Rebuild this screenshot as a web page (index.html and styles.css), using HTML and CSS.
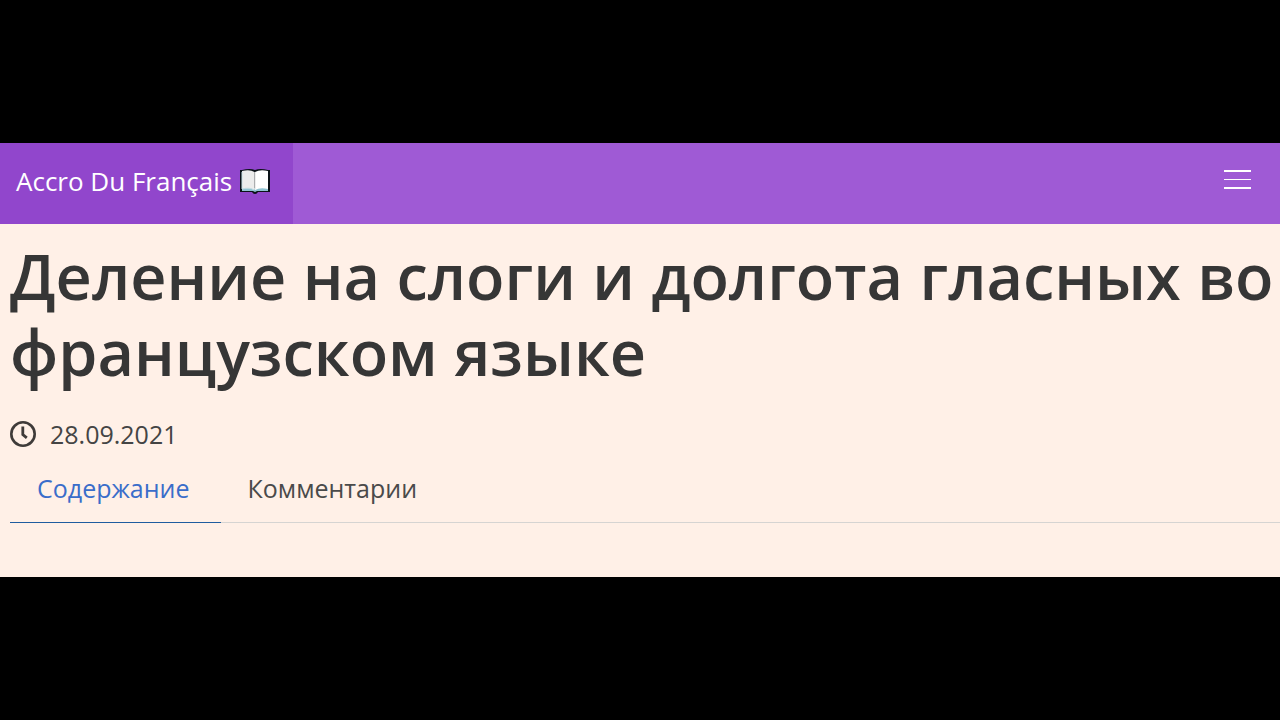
FILE: index.html
```html
<!DOCTYPE html>
<html lang="ru">
<head>
<meta charset="utf-8">
<meta name="viewport" content="width=device-width, initial-scale=1">
<title>Accro Du Français</title>
<link rel="stylesheet" href="styles.css">
</head>
<body>
<div class="page">
  <header class="navbar">
    <a class="brand" href="#">
      <span>Accro Du Français</span>
      <svg class="brand-icon" viewBox="0 0 32 26" aria-hidden="true">
        <path d="M1 2H3Q11 0 16 2Q21 0 29 2H31V24H19Q18 26 16 26Q14 26 13 24H1Z" fill="#0b1218"/>
        <path d="M3 20H29V23H18L16 24L14 23H3Z" fill="#8fc3d2"/>
        <path d="M3 3Q11 1 15.500 4V22Q11 19 3 21Z" fill="#ececec"/>
        <path d="M29 3Q21 1 16 4V22Q21 19 29 21Z" fill="#fff"/>
        <path d="M3 4V21Q11 19 15 22" fill="none" stroke="#c5dde3"/>
        <path d="M16 4V21" stroke="#dcdcdc"/>
      </svg>
    </a>
    <button class="burger" type="button" aria-label="Меню"><span></span><span class="burger-middle"></span><span></span></button>
  </header>
  <main class="article">
    <h1 class="title">Деление на слоги и долгота гласных во французском языке</h1>
    <div class="meta">
      <svg class="clock" viewBox="0 0 26 26" aria-hidden="true">
        <circle cx="13" cy="13" r="11.7" fill="none" stroke="#3f3b39" stroke-width="2.6"/>
        <path d="M12.8 5.500V13.5L16.8 16.8" fill="none" stroke="#3f3b39" stroke-width="2.8"/>
      </svg>
      <time datetime="2021-09-28">28.09.2021</time>
    </div>
    <nav class="tabs">
      <a class="tab tab-active" href="#content">Содержание</a>
      <a class="tab" href="#comments">Комментарии</a>
    </nav>
  </main>
</div>
</body>
</html>
```
FILE: styles.css
```css
* {
  box-sizing: border-box;
}

body {
  margin: 0;
  min-height: 100vh;
  padding: 143px 0;
  background: #000;
  color: #444;
  font-family: "Open Sans", "Noto Sans", sans-serif;
  font-size: 25px;
  line-height: 40px;
}

.page {
  background: #fff0e7;
}

.navbar {
  display: flex;
  justify-content: space-between;
  background: #9f5ad5;
}

.brand {
  display: flex;
  align-items: center;
  gap: 7px;
  padding: 18px 22px 23px 16px;
  background: #9146cc;
  color: #fff;
  font-size: 26px;
  text-decoration: none;
}

.brand-icon {
  width: 32px;
  height: 26px;
}

.burger {
  display: flex;
  flex-direction: column;
  justify-content: center;
  gap: 7px;
  padding: 0 29px 8px;
  border: 0;
  background: none;
}

.burger span {
  width: 27px;
  height: 2px;
  background: #fff;
}

.burger .burger-middle {
  height: 1px;
}

.article {
  padding: 14px 0 54px 10px;
}

.title {
  margin: 0;
  color: #363636;
  font-size: 63px;
  font-weight: 600;
  line-height: 76px;
}

.meta {
  display: flex;
  align-items: center;
  gap: 14px;
  margin-top: 24px;
}

.clock {
  width: 26px;
  height: 26px;
}

.tabs {
  display: flex;
  margin-top: 14px;
  border-bottom: 1px solid #d6d4d2;
}

.tab {
  margin-bottom: -1px;
  padding: 0 31px 14px 27px;
  border-bottom: 1px solid transparent;
  color: #4a4a4a;
  text-decoration: none;
}

.tab-active {
  border-bottom-color: #1f5c9f;
  color: #3a6dca;
}
```
